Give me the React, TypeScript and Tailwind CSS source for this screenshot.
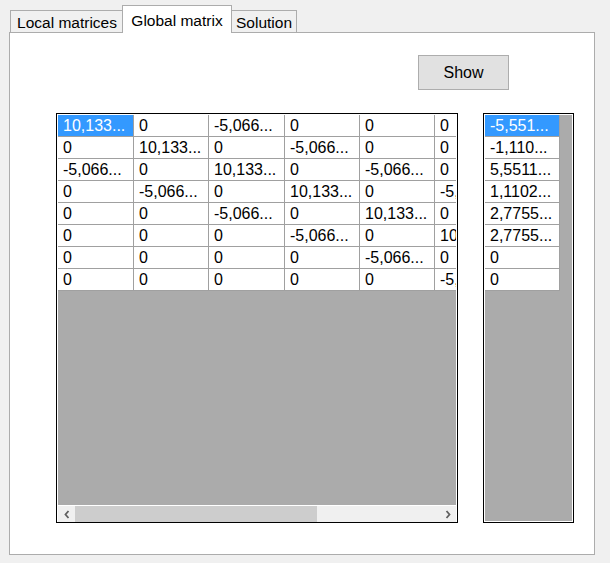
import React from "react";

const F = { fontFamily: '"Liberation Sans", Arial, sans-serif' };

const M = [
  ["10,133...", "0", "-5,066...", "0", "0", "0", "0", "0"],
  ["0", "10,133...", "0", "-5,066...", "0", "0", "0", "0"],
  ["-5,066...", "0", "10,133...", "0", "-5,066...", "0", "0", "0"],
  ["0", "-5,066...", "0", "10,133...", "0", "-5,066...", "0", "0"],
  ["0", "0", "-5,066...", "0", "10,133...", "0", "-5,066...", "0"],
  ["0", "0", "0", "-5,066...", "0", "10,133...", "0", "-5,066..."],
  ["0", "0", "0", "0", "-5,066...", "0", "10,133...", "0"],
  ["0", "0", "0", "0", "0", "-5,066...", "0", "10,133..."],
];

const V = ["-5,551...", "-1,110...", "5,5511...", "1,1102...", "2,7755...", "2,7755...", "0", "0"];

const colW = ["w-[76px]", "w-[75px]", "w-[76px]", "w-[75px]", "w-[75px]", "w-[75px]", "w-[75px]", "w-[75px]"];

function Cell({ text, sel, w }: { text: string; sel: boolean; w: string }) {
  return (
    <div
      className={`${w} h-[22px] shrink-0 border-r border-b border-[#a0a0a0] pl-[5px] text-[16px] leading-[21px] whitespace-nowrap overflow-hidden ${
        sel ? "bg-[#3399ff] text-white" : "bg-white text-black"
      }`}
    >
      {text}
    </div>
  );
}

export default function App() {
  return (
    <div className="w-[610px] h-[563px] bg-[#f0f0f0] pt-[5px] pl-[9px]" style={F}>
      {/* tabs */}
      <div className="flex items-end h-[27px] pl-[1px]">
        <div className="w-[114px] h-[22px] border-t border-l border-r border-[#acacac] bg-[#f0f0f0] flex items-center justify-center text-[15.5px] text-black pt-[2px]">
          Local matrices
        </div>
        <div className="relative z-10 -ml-[2px] -mb-[1px] w-[110px] h-[28px] border-t border-l border-r border-[#acacac] bg-white flex justify-center text-[15.5px] text-black pt-[3px]">
          Global matrix
        </div>
        <div className="-ml-[1px] w-[66px] h-[22px] border-t border-l border-r border-[#acacac] bg-[#f0f0f0] flex items-center justify-center text-[15.5px] text-black pt-[2px]">
          Solution
        </div>
      </div>
      {/* panel */}
      <div className="w-[586px] h-[523px] border border-[#acacac] bg-white flex flex-col">
        <div className="mt-[22px] ml-[408px] w-[91px] h-[35px] border border-[#adadad] bg-[#e1e1e1] flex items-center justify-center text-[16px] text-black">
          Show
        </div>
        <div className="mt-[23px] ml-[46px] flex gap-[25px]">
          {/* grid 1 */}
          <div className="w-[402px] h-[410px] border border-black bg-white pt-px px-px flex flex-col">
            <div className="flex-1 bg-[#ababab] overflow-hidden flex flex-col">
              {M.map((row, r) => (
                <div key={r} className="flex">
                  {row.map((t, c) => (
                    <Cell key={c} text={t} sel={r === 0 && c === 0} w={colW[c]} />
                  ))}
                </div>
              ))}
            </div>
            <div className="h-[17px] border-t border-white bg-[#f0f0f0] flex items-center">
              <div className="w-[17px] h-full flex items-center justify-center">
                <svg width="6" height="9" viewBox="0 0 6 9">
                  <path d="M4.5 1 L1.5 4.5 L4.5 8" fill="none" stroke="#606060" strokeWidth="1.8" />
                </svg>
              </div>
              <div className="w-[242px] h-full bg-[#cdcdcd]" />
              <div className="flex-1" />
              <div className="w-[17px] h-full flex items-center justify-center">
                <svg width="6" height="9" viewBox="0 0 6 9">
                  <path d="M1.5 1 L4.5 4.5 L1.5 8" fill="none" stroke="#606060" strokeWidth="1.8" />
                </svg>
              </div>
            </div>
          </div>
          {/* grid 2 */}
          <div className="w-[91px] h-[410px] border border-black bg-white p-px flex flex-col">
            <div className="flex-1 bg-[#ababab] flex flex-col">
              {V.map((t, r) => (
                <div key={r} className="flex">
                  <Cell text={t} sel={r === 0} w="w-[75px]" />
                </div>
              ))}
            </div>
          </div>
        </div>
      </div>
    </div>
  );
}
